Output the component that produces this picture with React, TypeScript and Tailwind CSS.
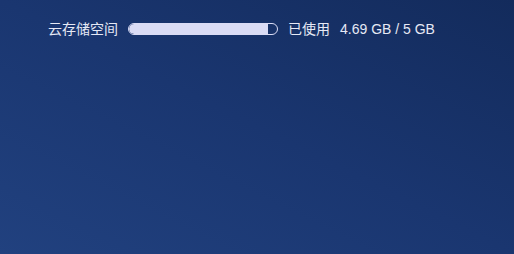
export default function App() {
  const used = 4.69
  const total = 5
  const pct = (used / total) * 100

  return (
    <div
      className="w-[514px] h-[254px] bg-gradient-to-tr from-[#21417f] via-[#1a3670] to-[#132b5c] text-[#e6e9f5]"
      style={{ fontFamily: '"Liberation Sans", Arial, "Noto Sans CJK SC", sans-serif' }}
    >
      <div className="flex items-center pl-[48px] pt-[20px] text-[14px] leading-[18px]">
        <span>云存储空间</span>
        <div className="ml-[10px] w-[150px] h-[12px] rounded-full border border-[#dadcf5] overflow-hidden">
          <div className="h-full bg-[#dadcf5] rounded-l-full" style={{ width: `${pct}%` }} />
        </div>
        <span className="ml-[10px]">已使用</span>
        <span className="ml-[10px]">{used} GB / {total} GB</span>
      </div>
    </div>
  )
}
